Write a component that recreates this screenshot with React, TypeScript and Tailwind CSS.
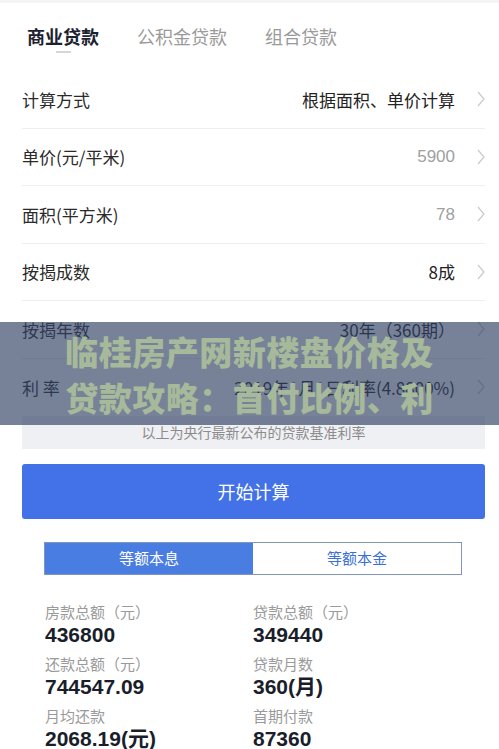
const TABS = ["商业贷款", "公积金贷款", "组合贷款"];

const ROWS = [
  { label: "计算方式", value: "根据面积、单价计算", muted: false },
  { label: "单价(元/平米)", value: "5900", muted: true },
  { label: "面积(平方米)", value: "78", muted: true },
  { label: "按揭成数", value: "8成", muted: false },
  { label: "按揭年数", value: "30年（360期）", muted: false },
  { label: "利 率", value: "2019年1月1日利率(4.8800%)", muted: false },
];

const RESULTS = [
  { label: "房款总额（元）", value: "436800" },
  { label: "贷款总额（元）", value: "349440" },
  { label: "还款总额（元）", value: "744547.09" },
  { label: "贷款月数", value: "360(月)" },
  { label: "月均还款", value: "2068.19(元)" },
  { label: "首期付款", value: "87360" },
];

const cjk = "font-['Noto_Sans_CJK_SC','Noto_Sans',sans-serif]";

// thin disclosure arrow at the end of each row
const Arrow = () => (
  <svg width="8" height="16" viewBox="0 0 8 16" className="shrink-0">
    <polyline points="1,1 7,8 1,15" fill="none" stroke="#c9c9c9" strokeWidth="1.2" />
  </svg>
);

export default function App() {
  return (
    <div className={`relative h-[749px] w-full overflow-hidden bg-white ${cjk}`}>
      <div className="h-[3px] bg-[#f3f4f6]" />

      {/* loan type tabs */}
      <div className="flex gap-[38px] px-[27px] pt-[20px] pb-[18px]">
        {TABS.map((t, i) => (
          <div key={t} className="flex flex-col items-center">
            <span
              className={`text-[18px] leading-[26px] ${
                i === 0 ? "font-bold text-[#1c2130]" : "text-[#9a9a9a]"
              }`}
            >
              {t}
            </span>
            <span className={`mt-[2px] h-[2px] w-[15px] ${i === 0 ? "bg-[#d4d6da]" : "bg-transparent"}`} />
          </div>
        ))}
      </div>

      {/* form rows */}
      <div className="ml-[22px] mr-[14px]">
        {ROWS.map((r, i) => (
          <div
            key={r.label}
            className={`flex h-[57.5px] items-center justify-between ${
              i < ROWS.length - 1 ? "border-b border-[#eceef1]" : ""
            }`}
          >
            <span className="text-[17px] text-[#2a2a2a]">{r.label}</span>
            <div className="flex items-center gap-[22px]">
              <span
                className={`text-[17px] ${
                  r.muted ? "font-['Liberation_Sans',sans-serif] text-[#a0a0a0]" : "text-[#222]"
                }`}
              >
                {r.value}
              </span>
              <Arrow />
            </div>
          </div>
        ))}
        <div className="flex h-[33px] items-center justify-center bg-[#eff0f3] text-[14px] text-[#8c8c8c]">
          以上为央行最新公布的贷款基准利率
        </div>

        <button className="mt-[15px] flex h-[55px] w-full items-center justify-center rounded-[3px] bg-[#4271e8] text-[18px] text-white">
          开始计算
        </button>
      </div>

      {/* repayment method toggle */}
      <div className="ml-[44px] mt-[23px] flex h-[33px] w-[418px] border border-[#7f95bd]">
        <div className="flex flex-1 items-center justify-center bg-[#4a7de2] text-[15px] text-white">
          等额本息
        </div>
        <div className="flex flex-1 items-center justify-center bg-white text-[15px] text-[#3c6fd6]">
          等额本金
        </div>
      </div>

      {/* results */}
      <div className="mt-[27px] grid grid-cols-[208px_1fr] gap-y-[6px] pl-[45px]">
        {RESULTS.map((r) => (
          <div key={r.label} className="flex flex-col">
            <span className="h-[20px] text-[15px] leading-[20px] text-[#9a9a9a]">{r.label}</span>
            <span className="h-[26px] font-['Liberation_Sans','Noto_Sans_CJK_SC',sans-serif] text-[21px] font-bold leading-[26px] text-[#1a1e2b]">
              {r.value}
            </span>
          </div>
        ))}
      </div>

      {/* headline banner laid over the form */}
      <div className="absolute left-0 right-0 top-[322px] flex h-[103px] flex-col items-center justify-center bg-[rgba(48,66,100,0.66)]">
        <p className="text-[33px] font-black leading-[46px] tracking-[0.5px] text-[#a6b99a]">
          临桂房产网新楼盘价格及
        </p>
        <p className="text-[33px] font-black leading-[46px] tracking-[0.5px] text-[#a6b99a]">
          贷款攻略：首付比例、利
        </p>
      </div>
    </div>
  );
}
